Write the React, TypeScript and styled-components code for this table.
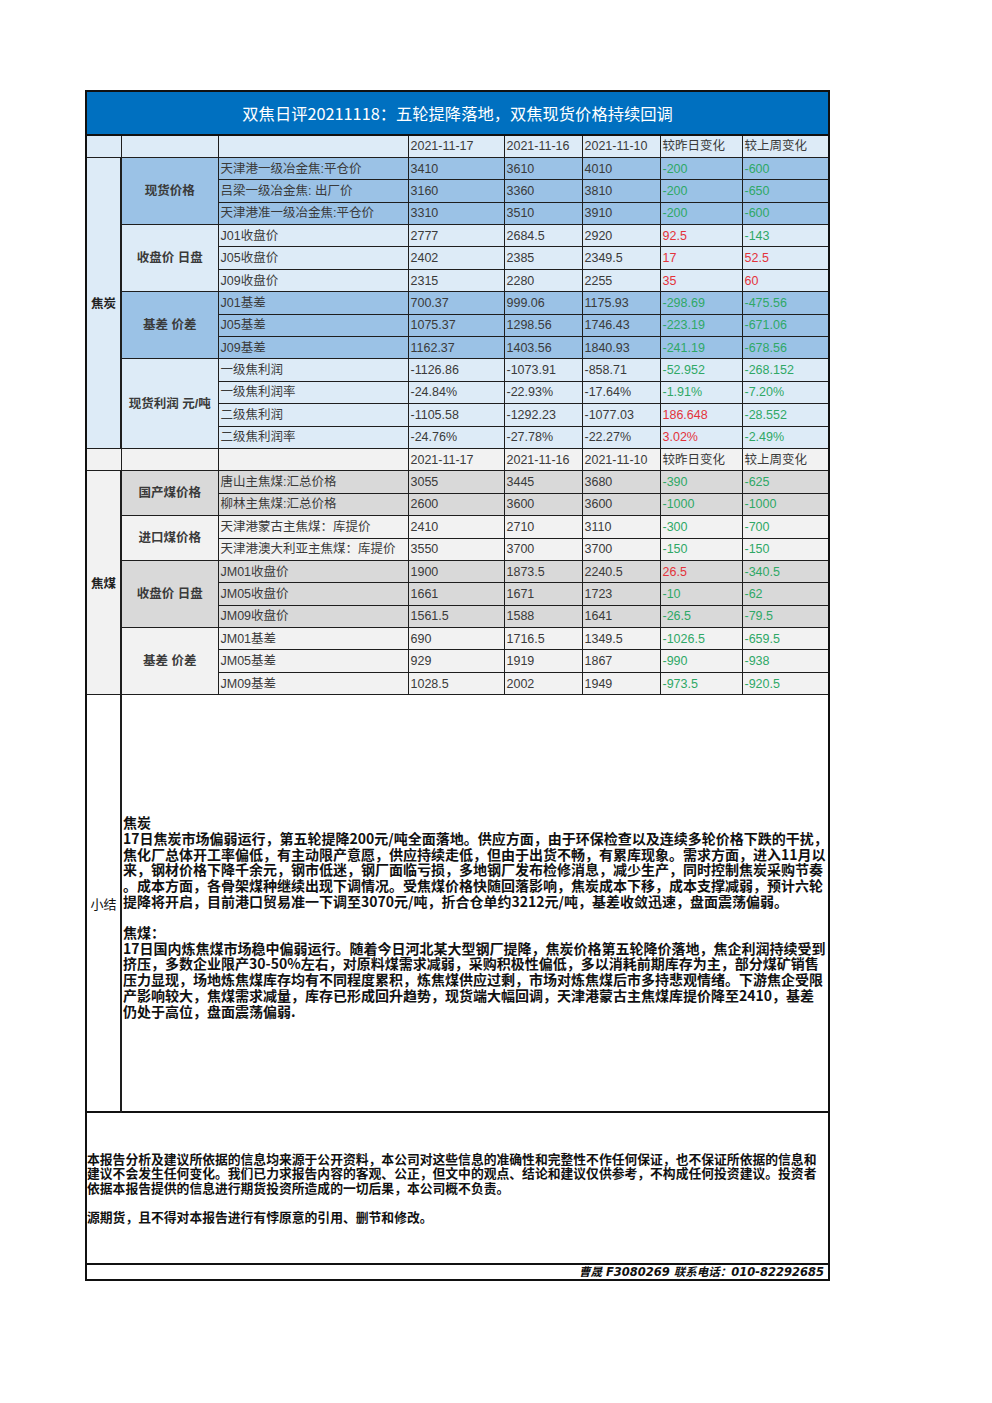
import React from "react";
import styled, { createGlobalStyle } from "styled-components";

const Global = createGlobalStyle`
  html, body { margin: 0; padding: 0; background: #ffffff; }
  body { font-family: "Liberation Sans", "Noto Sans CJK SC", sans-serif; }
`;

const Page = styled.div`
  padding: 90px 0 0 85px;
  width: 744px;
`;

const Sheet = styled.table`
  width: 743px;
  table-layout: fixed;
  border-collapse: collapse;
  border: 2px solid #111;
`;

const TitleCell = styled.td`
  height: 42px;
  background: #0070c0;
  color: #ffffff;
  text-align: center;
  font-family: "Noto Sans CJK SC", sans-serif;
  font-size: 16.3px;
  font-weight: 400;
  border: 2px solid #111;
  padding: 0;
`;

const Row = styled.tr`
  height: 22.4px;
`;

const Cell = styled.td<{ $bg?: string; $color?: string; $bold?: boolean; $center?: boolean }>`
  background: ${(p) => p.$bg || "#ffffff"};
  color: ${(p) => p.$color || "#3a3a3a"};
  font-family: "Liberation Sans", "Noto Sans CJK SC", sans-serif;
  font-size: 12.5px;
  font-weight: ${(p) => (p.$bold ? 700 : 400)};
  text-align: ${(p) => (p.$center ? "center" : "left")};
  border: 1px solid #1e1e1e;
  padding: 0 2px;
  white-space: nowrap;
  overflow: hidden;
  line-height: 20px;
`;

const SideCell = styled.td<{ $bg: string }>`
  background: ${(p) => p.$bg};
  color: #222;
  font-family: "Noto Sans CJK SC", sans-serif;
  font-size: 12.5px;
  font-weight: 700;
  text-align: center;
  border: 1px solid #1e1e1e;
  border-right-width: 2px;
  padding: 0;
`;

const SummaryLabel = styled.td`
  background: #fff;
  color: #111;
  font-family: "Noto Sans CJK SC", sans-serif;
  font-size: 13px;
  text-align: center;
  border: 1px solid #1e1e1e;
  border-right-width: 2px;
  padding: 0;
`;

const SummaryCell = styled.td`
  height: 296px;
  vertical-align: top;
  background: #fff;
  border: 1px solid #1e1e1e;
  padding: 120px 0 0 1px;
`;

const TextLine = styled.div<{ $size: number; $lh: number }>`
  font-family: "Noto Sans CJK SC", sans-serif;
  font-size: ${(p) => p.$size}px;
  line-height: ${(p) => p.$lh}px;
  height: ${(p) => p.$lh}px;
  font-weight: 700;
  color: #111;
  white-space: nowrap;
`;

const DisclaimerCell = styled.td`
  height: 150px;
  background: #fff;
  border-top: 2px solid #111;
  vertical-align: middle;
  padding: 0;
`;

const FooterCell = styled.td`
  height: 14px;
  border-top: 2px solid #111;
  text-align: right;
  padding: 0 4px 0 0;
  font-family: "DejaVu Sans", "Noto Sans CJK SC", sans-serif;
  font-size: 11.5px;
  line-height: 14px;
  font-style: italic;
  font-weight: 700;
  color: #111;
`;

type Group = { label: string; bg: string; rows: string[][] };

const LIGHT_BLUE = "#ddebf7";
const MID_BLUE = "#9bc2e6";
const GREY = "#d9d9d9";
const LIGHT_GREY = "#f2f2f2";

const coke: Group[] = [
  {
    label: "现货价格",
    bg: MID_BLUE,
    rows: [
      ["天津港一级冶金焦:平仓价", "3410", "3610", "4010", "-200", "-600"],
      ["吕梁一级冶金焦: 出厂价", "3160", "3360", "3810", "-200", "-650"],
      ["天津港准一级冶金焦:平仓价", "3310", "3510", "3910", "-200", "-600"],
    ],
  },
  {
    label: "收盘价 日盘",
    bg: LIGHT_BLUE,
    rows: [
      ["J01收盘价", "2777", "2684.5", "2920", "92.5", "-143"],
      ["J05收盘价", "2402", "2385", "2349.5", "17", "52.5"],
      ["J09收盘价", "2315", "2280", "2255", "35", "60"],
    ],
  },
  {
    label: "基差 价差",
    bg: MID_BLUE,
    rows: [
      ["J01基差", "700.37", "999.06", "1175.93", "-298.69", "-475.56"],
      ["J05基差", "1075.37", "1298.56", "1746.43", "-223.19", "-671.06"],
      ["J09基差", "1162.37", "1403.56", "1840.93", "-241.19", "-678.56"],
    ],
  },
  {
    label: "现货利润 元/吨",
    bg: LIGHT_BLUE,
    rows: [
      ["一级焦利润", "-1126.86", "-1073.91", "-858.71", "-52.952", "-268.152"],
      ["一级焦利润率", "-24.84%", "-22.93%", "-17.64%", "-1.91%", "-7.20%"],
      ["二级焦利润", "-1105.58", "-1292.23", "-1077.03", "186.648", "-28.552"],
      ["二级焦利润率", "-24.76%", "-27.78%", "-22.27%", "3.02%", "-2.49%"],
    ],
  },
];

const coal: Group[] = [
  {
    label: "国产煤价格",
    bg: GREY,
    rows: [
      ["唐山主焦煤:汇总价格", "3055", "3445", "3680", "-390", "-625"],
      ["柳林主焦煤:汇总价格", "2600", "3600", "3600", "-1000", "-1000"],
    ],
  },
  {
    label: "进口煤价格",
    bg: LIGHT_GREY,
    rows: [
      ["天津港蒙古主焦煤：库提价", "2410", "2710", "3110", "-300", "-700"],
      ["天津港澳大利亚主焦煤：库提价", "3550", "3700", "3700", "-150", "-150"],
    ],
  },
  {
    label: "收盘价 日盘",
    bg: GREY,
    rows: [
      ["JM01收盘价", "1900", "1873.5", "2240.5", "26.5", "-340.5"],
      ["JM05收盘价", "1661", "1671", "1723", "-10", "-62"],
      ["JM09收盘价", "1561.5", "1588", "1641", "-26.5", "-79.5"],
    ],
  },
  {
    label: "基差 价差",
    bg: LIGHT_GREY,
    rows: [
      ["JM01基差", "690", "1716.5", "1349.5", "-1026.5", "-659.5"],
      ["JM05基差", "929", "1919", "1867", "-990", "-938"],
      ["JM09基差", "1028.5", "2002", "1949", "-973.5", "-920.5"],
    ],
  },
];

const GREEN = "#2fa866";
const RED = "#e3333b";

const changeColor = (v: string) => (v.trim().startsWith("-") ? GREEN : RED);

const headerDates = ["2021-11-17", "2021-11-16", "2021-11-10", "较昨日变化", "较上周变化"];

const widths = [35, 97, 190, 96, 78, 78, 82, 87];

const summaryLines = [
  "焦炭",
  "17日焦炭市场偏弱运行，第五轮提降200元/吨全面落地。供应方面，由于环保检查以及连续多轮价格下跌的干扰，",
  "焦化厂总体开工率偏低，有主动限产意愿，供应持续走低，但由于出货不畅，有累库现象。需求方面，进入11月以",
  "来，钢材价格下降千余元，钢市低迷，钢厂面临亏损，多地钢厂发布检修消息，减少生产，同时控制焦炭采购节奏",
  "。成本方面，各骨架煤种继续出现下调情况。受焦煤价格快随回落影响，焦炭成本下移，成本支撑减弱，预计六轮",
  "提降将开启，目前港口贸易准一下调至3070元/吨，折合仓单约3212元/吨，基差收敛迅速，盘面震荡偏弱。",
  "",
  "焦煤：",
  "17日国内炼焦煤市场稳中偏弱运行。随着今日河北某大型钢厂提降，焦炭价格第五轮降价落地，焦企利润持续受到",
  "挤压，多数企业限产30-50%左右，对原料煤需求减弱，采购积极性偏低，多以消耗前期库存为主，部分煤矿销售",
  "压力显现，场地炼焦煤库存均有不同程度累积，炼焦煤供应过剩，市场对炼焦煤后市多持悲观情绪。下游焦企受限",
  "产影响较大，焦煤需求减量，库存已形成回升趋势，现货端大幅回调，天津港蒙古主焦煤库提价降至2410，基差",
  "仍处于高位，盘面震荡偏弱.",
];

const disclaimerLines = [
  "本报告分析及建议所依据的信息均来源于公开资料，本公司对这些信息的准确性和完整性不作任何保证，也不保证所依据的信息和",
  "建议不会发生任何变化。我们已力求报告内容的客观、公正，但文中的观点、结论和建议仅供参考，不构成任何投资建议。投资者",
  "依据本报告提供的信息进行期货投资所造成的一切后果，本公司概不负责。",
  "",
  "源期货，且不得对本报告进行有悖原意的引用、删节和修改。",
];

const HeaderRow: React.FC<{ bg: string }> = ({ bg }) => (
  <Row>
    <Cell $bg={bg} />
    <Cell $bg={bg} />
    <Cell $bg={bg} />
    {headerDates.map((d) => (
      <Cell key={d} $bg={bg}>
        {d}
      </Cell>
    ))}
  </Row>
);

const Section: React.FC<{ name: string; sideBg: string; groups: Group[] }> = ({ name, sideBg, groups }) => {
  const total = groups.reduce((n, g) => n + g.rows.length, 0);
  return (
    <>
      {groups.map((g, gi) =>
        g.rows.map((r, ri) => (
          <Row key={`${gi}-${ri}`}>
            {gi === 0 && ri === 0 && (
              <SideCell rowSpan={total} $bg={sideBg}>
                {name}
              </SideCell>
            )}
            {ri === 0 && (
              <Cell rowSpan={g.rows.length} $bg={g.bg} $bold $center>
                {g.label}
              </Cell>
            )}
            <Cell $bg={g.bg}>{r[0]}</Cell>
            <Cell $bg={g.bg}>{r[1]}</Cell>
            <Cell $bg={g.bg}>{r[2]}</Cell>
            <Cell $bg={g.bg}>{r[3]}</Cell>
            <Cell $bg={g.bg} $color={changeColor(r[4])}>
              {r[4]}
            </Cell>
            <Cell $bg={g.bg} $color={changeColor(r[5])}>
              {r[5]}
            </Cell>
          </Row>
        ))
      )}
    </>
  );
};

export default function App() {
  return (
    <>
      <Global />
      <Page>
        <Sheet>
          <colgroup>
            {widths.map((w, i) => (
              <col key={i} style={{ width: w }} />
            ))}
          </colgroup>
          <tbody>
            <tr>
              <TitleCell colSpan={8}>双焦日评20211118：五轮提降落地，双焦现货价格持续回调</TitleCell>
            </tr>
            <HeaderRow bg={LIGHT_BLUE} />
            <Section name="焦炭" sideBg={LIGHT_BLUE} groups={coke} />
            <HeaderRow bg={LIGHT_GREY} />
            <Section name="焦煤" sideBg={LIGHT_GREY} groups={coal} />
            <tr>
              <SummaryLabel>小结</SummaryLabel>
              <SummaryCell colSpan={7}>
                {summaryLines.map((l, i) => (
                  <TextLine key={i} $size={14} $lh={15.7}>
                    {l}
                  </TextLine>
                ))}
              </SummaryCell>
            </tr>
            <tr>
              <DisclaimerCell colSpan={8}>
                {disclaimerLines.map((l, i) => (
                  <TextLine key={i} $size={12.8} $lh={14.7}>
                    {l}
                  </TextLine>
                ))}
              </DisclaimerCell>
            </tr>
            <tr>
              <FooterCell colSpan={8}>曹晟 F3080269 联系电话：010-82292685</FooterCell>
            </tr>
          </tbody>
        </Sheet>
      </Page>
    </>
  );
}
